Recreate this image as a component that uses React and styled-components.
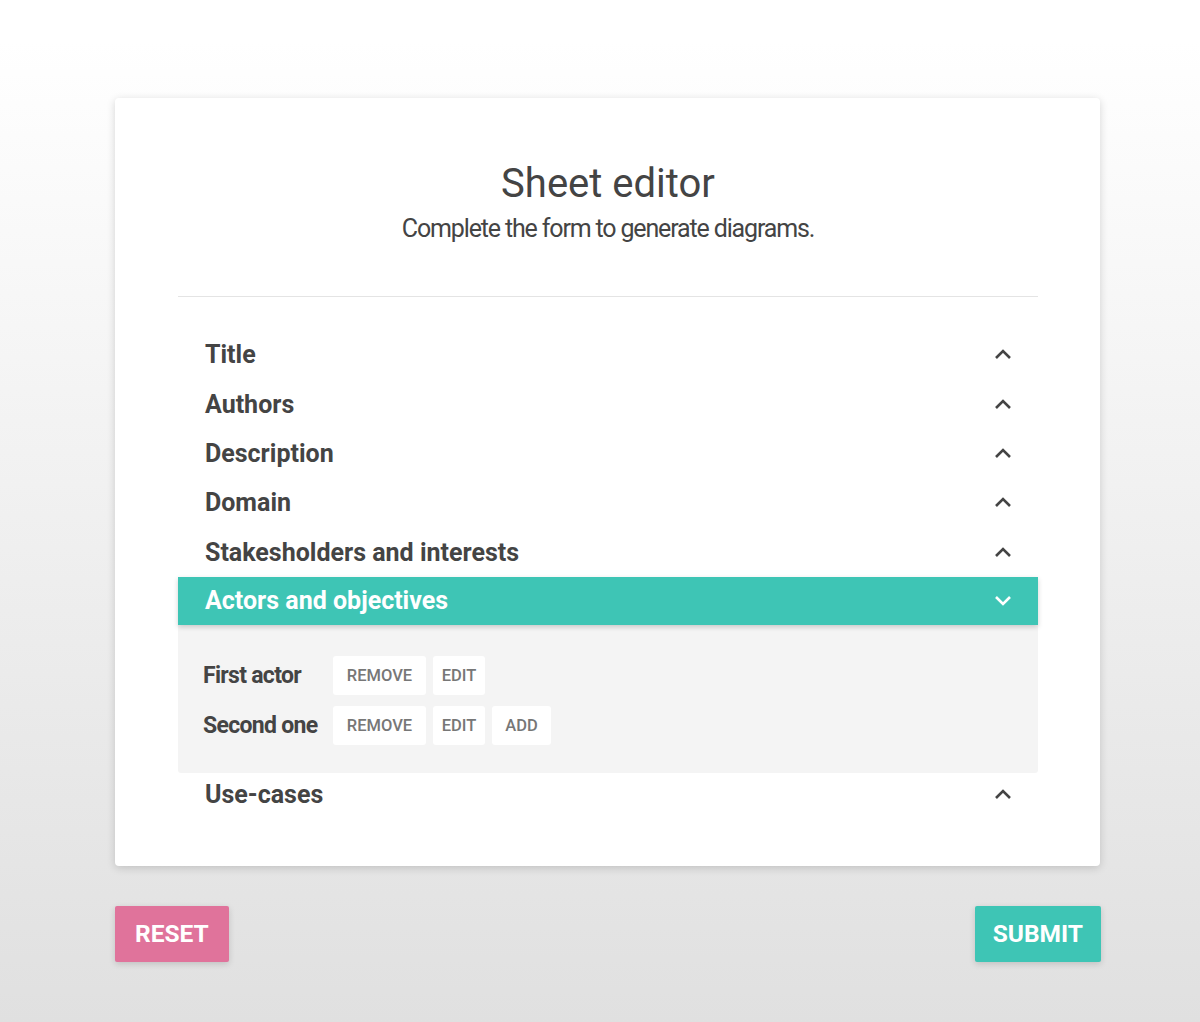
import React, { useState } from 'react';
import styled, { createGlobalStyle } from 'styled-components';

const GlobalStyle = createGlobalStyle`
    html, body {
        margin: 0;
        padding: 0;
    }
    body {
        font-family: Roboto, 'Liberation Sans', sans-serif;
        background: linear-gradient(to bottom, #ffffff 4%, #e0e0e0 100%);
        min-height: 1022px;
        color: #444;
    }
`

//style
const Page = styled.div`
    width: 986px;
    padding: 98px 0 60px 115px;
`

const Card = styled.div`
    width: 985px;
    box-sizing: border-box;
    background: #fff;
    border-radius: 4px;
    box-shadow: 0 2px 8px rgba(0, 0, 0, 0.16);
    padding: 62px 62px 50px 63px;
`

const Header = styled.div`
    text-align: center;

    h1 {
        margin: 0;
        font-size: 40px;
        line-height: 48px;
        font-weight: 400;
        color: #444;
    }

    p {
        margin: 6px 0 0;
        font-size: 25px;
        line-height: 30px;
        letter-spacing: -1.15px;
        color: #444;
    }
`

const Divider = styled.hr`
    border: none;
    border-top: 1px solid #e4e4e4;
    margin: 52px 0 33px;
`

const Row = styled.div`
    height: ${pr => pr.h || 49.4}px;
    display: flex;
    align-items: center;
    justify-content: space-between;
    padding: 0 27px;
    cursor: pointer;
    background: ${pr => pr.open ? '#3ec5b5' : 'transparent'};
    color: ${pr => pr.open ? '#fff' : '#444'};
    box-shadow: ${pr => pr.open ? '0 2px 5px rgba(0,0,0,0.18)' : 'none'};
    position: relative;
    z-index: 1;

    span {
        font-size: 25px;
        font-weight: 700;
    }

    svg {
        margin-right: -1px;
    }
`

const Panel = styled.div`
    background: #f4f4f4;
    border-radius: 0 0 3px 3px;
    padding: 31px 25px 28px;
    display: flex;
    flex-direction: column;
    gap: 11px;
`

const ActorRow = styled.div`
    display: flex;
    align-items: center;
    gap: 7px;
`

const ActorName = styled.div`
    width: 123px;
    font-size: 23px;
    font-weight: 700;
    letter-spacing: -0.7px;
    color: #444;
`

const SmallButton = styled.button`
    width: ${pr => pr.w}px;
    height: 39px;
    padding: 0;
    border: none;
    border-radius: 3px;
    background: #fff;
    color: #777;
    font-family: Roboto, 'Liberation Sans', sans-serif;
    font-size: 16.5px;
    font-weight: 500;
    cursor: pointer;
`

const Footer = styled.div`
    display: flex;
    justify-content: space-between;
    margin-top: 40px;
`

const BigButton = styled.button`
    height: 56px;
    padding: 0 ${pr => pr.pad}px;
    border: none;
    border-radius: 2px;
    background: ${pr => pr.color};
    color: #fff;
    font-family: Roboto, 'Liberation Sans', sans-serif;
    font-size: 24.5px;
    font-weight: 700;
    box-shadow: 0 2px 6px rgba(0, 0, 0, 0.15);
    cursor: pointer;
`
//end style

const Chevron = ({ down, color }) => (
    <svg width="18" height="11" viewBox="0 0 18 11">
        <polyline
            points={down ? '2,2 9,9 16,2' : '2,9 9,2 16,9'}
            fill="none"
            stroke={color}
            strokeWidth="2.6"
        />
    </svg>
)

const sections = [
    'Title',
    'Authors',
    'Description',
    'Domain',
    'Stakesholders and interests',
    'Actors and objectives',
    'Use-cases',
]

export default function App() {
    const [open, setOpen] = useState('Actors and objectives')

    return (
        <Page>
            <GlobalStyle />
            <Card>
                <Header>
                    <h1>Sheet editor</h1>
                    <p>Complete the form to generate diagrams.</p>
                </Header>
                <Divider />
                {sections.map(s => (
                    <div key={s}>
                        <Row
                            open={open === s}
                            h={s === 'Use-cases' ? 43 : s === 'Actors and objectives' ? 48 : 49.4}
                            onClick={() => setOpen(open === s ? '' : s)}
                        >
                            <span>{s}</span>
                            <Chevron down={open === s} color={open === s ? '#fff' : '#444'} />
                        </Row>
                        {open === s && s === 'Actors and objectives' && (
                            <Panel>
                                <ActorRow>
                                    <ActorName>First actor</ActorName>
                                    <SmallButton w={93}>REMOVE</SmallButton>
                                    <SmallButton w={52}>EDIT</SmallButton>
                                </ActorRow>
                                <ActorRow>
                                    <ActorName>Second one</ActorName>
                                    <SmallButton w={93}>REMOVE</SmallButton>
                                    <SmallButton w={52}>EDIT</SmallButton>
                                    <SmallButton w={59}>ADD</SmallButton>
                                </ActorRow>
                            </Panel>
                        )}
                    </div>
                ))}
            </Card>
            <Footer>
                <BigButton color="#e0739b" pad={20}>RESET</BigButton>
                <BigButton color="#3ec5b5" pad={18}>SUBMIT</BigButton>
            </Footer>
        </Page>
    )
}
